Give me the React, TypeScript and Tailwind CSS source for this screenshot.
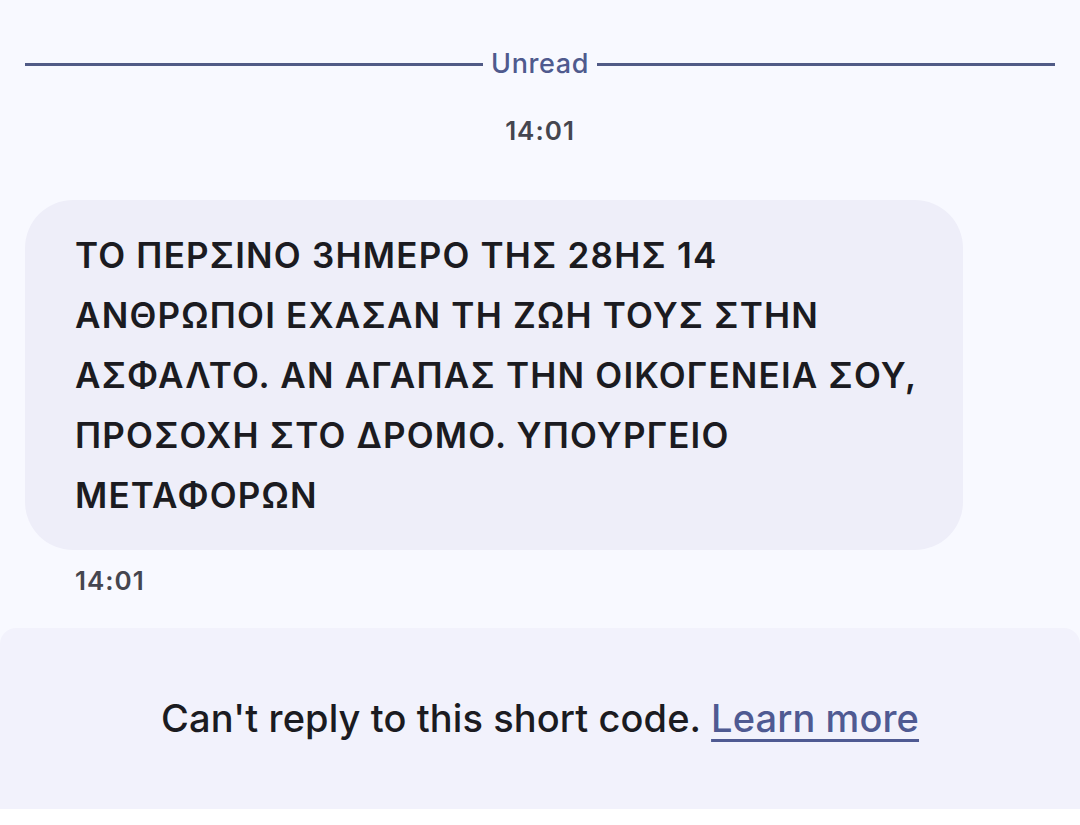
import React from 'react';

const lines = [
  'ΤΟ ΠΕΡΣΙΝΟ 3ΗΜΕΡΟ ΤΗΣ 28ΗΣ 14',
  'ΑΝΘΡΩΠΟΙ ΕΧΑΣΑΝ ΤΗ ΖΩΗ ΤΟΥΣ ΣΤΗΝ',
  'ΑΣΦΑΛΤΟ. ΑΝ ΑΓΑΠΑΣ ΤΗΝ ΟΙΚΟΓΕΝΕΙΑ ΣΟΥ,',
  'ΠΡΟΣΟΧΗ ΣΤΟ ΔΡΟΜΟ. ΥΠΟΥΡΓΕΙΟ',
  'ΜΕΤΑΦΟΡΩΝ',
];

const App = () => {
  return (
    <div className="w-[1080px] h-[825px] bg-white font-['Inter',sans-serif] flex flex-col">
      <div className="bg-[#f8f9ff] flex flex-col">
        {/* unread divider */}
        <div className="flex items-center px-[25px] pt-[47px]">
          <div className="flex-1 h-[3px] bg-[#515b86]" />
          <span className="px-[8px] text-[27px] leading-[34px] font-medium text-[#4f5a8e] tracking-[0.6px]">Unread</span>
          <div className="flex-1 h-[3px] bg-[#515b86]" />
        </div>

        <div className="text-center text-[26px] leading-[32px] font-semibold text-[#45464f] tracking-[1px] mt-[34px]">14:01</div>

        {/* message */}
        <div className="px-[25px] mt-[53px]">
          <div className="w-[938px] bg-[#eeeef9] rounded-[48px] px-[50px] py-[25px]">
            <p className="text-[35px] leading-[60px] font-semibold text-[#1b1b21] tracking-[1.2px] whitespace-nowrap">
              {lines.map((l, i) => (
                <React.Fragment key={i}>
                  {l}
                  {i < lines.length - 1 && <br />}
                </React.Fragment>
              ))}
            </p>
          </div>
          <div className="pl-[50px] mt-[15px] text-[26px] leading-[32px] font-semibold text-[#45464f] tracking-[1px]">14:01</div>
        </div>

        <div className="h-[31px]" />
      </div>

      {/* bottom notice */}
      <div className="bg-[#f8f9ff]">
        <div className="h-[181px] bg-[#f2f2fc] rounded-t-[16px] flex items-center justify-center">
          <p className="text-[38px] font-medium text-[#1b1b21] tracking-[0.1px]">
            Can't reply to this short code.{' '}
            <a className="text-[#4f5a92] underline decoration-[3px] underline-offset-[7px]">Learn more</a>
          </p>
        </div>
      </div>
    </div>
  );
};

export default App;
